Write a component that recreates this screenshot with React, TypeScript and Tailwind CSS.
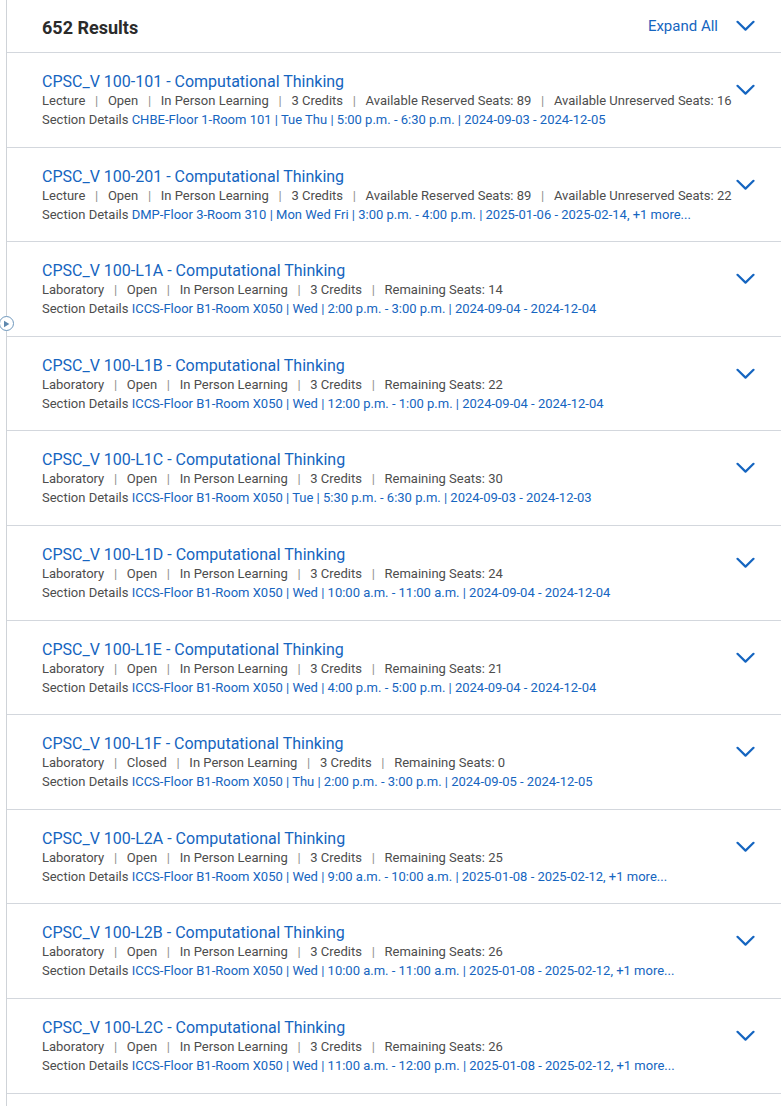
import React from "react";

type Row = {
  code: string;
  type: string;
  status: string;
  extra: string[];
  details: string;
};

const rows: Row[] = [
  { code: "100-101", type: "Lecture", status: "Open", extra: ["Available Reserved Seats: 89", "Available Unreserved Seats: 16"], details: "CHBE-Floor 1-Room 101 | Tue Thu | 5:00 p.m. - 6:30 p.m. | 2024-09-03 - 2024-12-05" },
  { code: "100-201", type: "Lecture", status: "Open", extra: ["Available Reserved Seats: 89", "Available Unreserved Seats: 22"], details: "DMP-Floor 3-Room 310 | Mon Wed Fri | 3:00 p.m. - 4:00 p.m. | 2025-01-06 - 2025-02-14, +1 more..." },
  { code: "100-L1A", type: "Laboratory", status: "Open", extra: ["Remaining Seats: 14"], details: "ICCS-Floor B1-Room X050 | Wed | 2:00 p.m. - 3:00 p.m. | 2024-09-04 - 2024-12-04" },
  { code: "100-L1B", type: "Laboratory", status: "Open", extra: ["Remaining Seats: 22"], details: "ICCS-Floor B1-Room X050 | Wed | 12:00 p.m. - 1:00 p.m. | 2024-09-04 - 2024-12-04" },
  { code: "100-L1C", type: "Laboratory", status: "Open", extra: ["Remaining Seats: 30"], details: "ICCS-Floor B1-Room X050 | Tue | 5:30 p.m. - 6:30 p.m. | 2024-09-03 - 2024-12-03" },
  { code: "100-L1D", type: "Laboratory", status: "Open", extra: ["Remaining Seats: 24"], details: "ICCS-Floor B1-Room X050 | Wed | 10:00 a.m. - 11:00 a.m. | 2024-09-04 - 2024-12-04" },
  { code: "100-L1E", type: "Laboratory", status: "Open", extra: ["Remaining Seats: 21"], details: "ICCS-Floor B1-Room X050 | Wed | 4:00 p.m. - 5:00 p.m. | 2024-09-04 - 2024-12-04" },
  { code: "100-L1F", type: "Laboratory", status: "Closed", extra: ["Remaining Seats: 0"], details: "ICCS-Floor B1-Room X050 | Thu | 2:00 p.m. - 3:00 p.m. | 2024-09-05 - 2024-12-05" },
  { code: "100-L2A", type: "Laboratory", status: "Open", extra: ["Remaining Seats: 25"], details: "ICCS-Floor B1-Room X050 | Wed | 9:00 a.m. - 10:00 a.m. | 2025-01-08 - 2025-02-12, +1 more..." },
  { code: "100-L2B", type: "Laboratory", status: "Open", extra: ["Remaining Seats: 26"], details: "ICCS-Floor B1-Room X050 | Wed | 10:00 a.m. - 11:00 a.m. | 2025-01-08 - 2025-02-12, +1 more..." },
  { code: "100-L2C", type: "Laboratory", status: "Open", extra: ["Remaining Seats: 26"], details: "ICCS-Floor B1-Room X050 | Wed | 11:00 a.m. - 12:00 p.m. | 2025-01-08 - 2025-02-12, +1 more..." },
];

function Chevron() {
  return (
    <svg width="19" height="12" viewBox="0 0 19 12" fill="none">
      <path d="M1.5 1.8 L9.5 9.6 L17.5 1.8" stroke="#1565c0" strokeWidth="2.2" strokeLinecap="round" strokeLinejoin="round" />
    </svg>
  );
}

function Sep() {
  return <span className="mx-[9.7px] text-[#8f8f8f]">|</span>;
}

export default function App() {
  return (
    <div className="min-h-[1106px] bg-white font-['Roboto',sans-serif]">
      <div className="relative ml-[6px] min-h-[1106px] border-l border-[#cfd3d8]">
        <div className="absolute left-[-8px] top-[316px] flex h-[15px] w-[15px] items-center justify-center rounded-full border border-[#6f98bd] bg-white">
          <svg width="7" height="8" viewBox="0 0 7 8">
            <path d="M1 0.8 L6.3 4 L1 7.2 Z" fill="#5f88ae" />
          </svg>
        </div>
        <div className="flex h-[53px] items-center justify-between border-b border-[#d3d7dd] pl-[35px] pr-[26px]">
          <div className="mt-[4px] text-[18px] font-bold leading-[24px] text-[#2b2b2b]">652 Results</div>
          <div className="flex items-center">
            <span className="text-[15px] leading-[20px] text-[#1565c0]">Expand All</span>
            <span className="ml-[18px] flex">
              <Chevron />
            </span>
          </div>
        </div>
        {rows.map((r) => (
          <div key={r.code} className="flex border-b border-[#d3d7dd] pb-[17.6px] pl-[35px] pr-[26px] pt-[20px]">
            <div className="min-w-0 flex-1">
              <div className="text-[16px] leading-[18px] text-[#1565c0]">
                CPSC_V {r.code} - Computational Thinking
              </div>
              <div className="whitespace-nowrap text-[13px] leading-[19px] text-[#4d4d4d]">
                <span>{r.type}</span>
                <Sep />
                <span>{r.status}</span>
                <Sep />
                <span>In Person Learning</span>
                <Sep />
                <span>3 Credits</span>
                {r.extra.map((e) => (
                  <React.Fragment key={e}>
                    <Sep />
                    <span>{e}</span>
                  </React.Fragment>
                ))}
              </div>
              <div className="whitespace-nowrap text-[13px] leading-[19px] text-[#4d4d4d]">
                Section Details <span className="text-[#1565c0]">{r.details}</span>
              </div>
            </div>
            <div className="ml-[6px] mt-[11px] flex h-[12px] w-[19px] shrink-0">
              <Chevron />
            </div>
          </div>
        ))}
      </div>
    </div>
  );
}
